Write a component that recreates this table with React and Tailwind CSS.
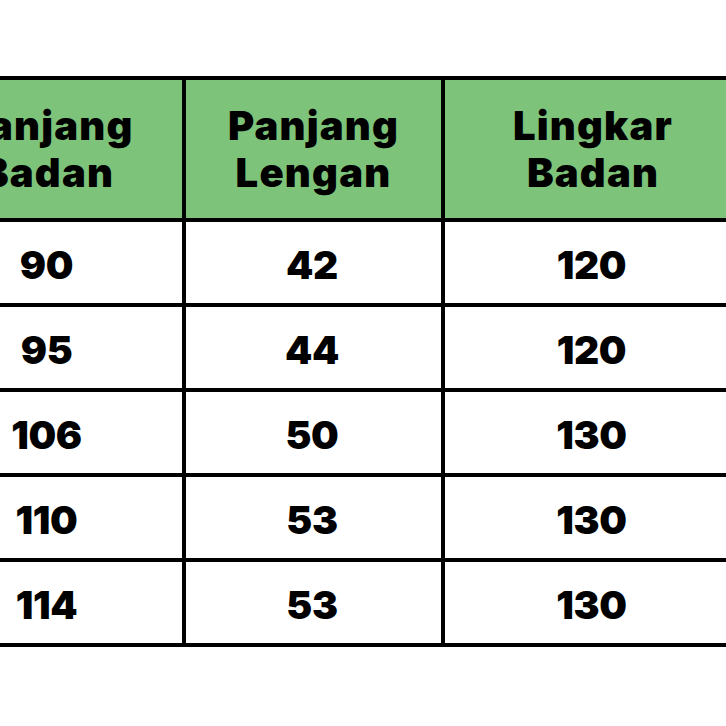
export default function App() {
  const headers = [
    ["Panjang", "Badan"],
    ["Panjang", "Lengan"],
    ["Lingkar", "Badan"],
  ];
  const rows = [
    ["90", "42", "120"],
    ["95", "44", "120"],
    ["106", "50", "130"],
    ["110", "53", "130"],
    ["114", "53", "130"],
  ];
  return (
    <div
      className="w-[726px] h-[726px] bg-white overflow-hidden pt-[76px]"
      style={{ fontFamily: "Inter, 'Noto Sans', sans-serif" }}
    >
      <div className="ml-[-90px] w-fit bg-black p-[4px] grid grid-cols-[268px_255px_296px] grid-rows-[138px_81px_81px_81px_81px_81px] gap-[4px]">
        {headers.map((h, i) => (
          <div
            key={"h" + i}
            className="bg-[#7dc47a] flex flex-col items-center justify-center text-[40px] leading-[47px] font-black tracking-[0.03em] text-black"
          >
            <span>{h[0]}</span>
            <span>{h[1]}</span>
          </div>
        ))}
        {rows.map((r, ri) =>
          r.map((c, ci) => (
            <div
              key={ri + "-" + ci}
              className="bg-white flex items-center justify-center pt-[4px] pr-[3px] text-[39px] leading-none font-black tracking-[-0.01em] text-black"
            >
              {c}
            </div>
          ))
        )}
      </div>
    </div>
  );
}
